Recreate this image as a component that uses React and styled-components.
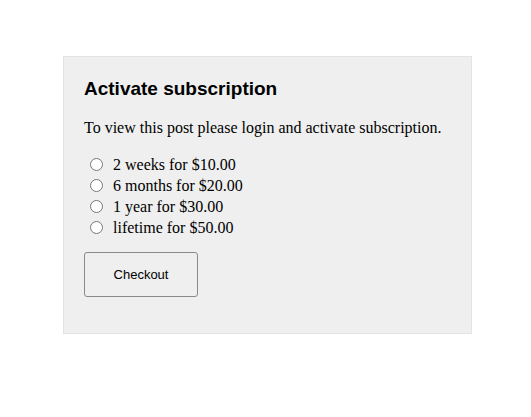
import styled, { createGlobalStyle } from "styled-components";

const GlobalStyle = createGlobalStyle`
  body {
    margin: 0;
    background: #fff;
    font-family: "Liberation Serif", "Times New Roman", serif;
  }
`;

const Page = styled.div`
  padding: 56px 0 0 63px;
`;

const Panel = styled.div`
  width: 367px;
  height: 236px;
  padding: 20px;
  background: #efefef;
  border: 1px solid #e3e3e3;
`;

const Title = styled.h3`
  margin: 0;
  font-family: "Liberation Sans", Arial, sans-serif;
  font-size: 19px;
  font-weight: bold;
  color: #000;
  line-height: 24px;
`;

const Text = styled.p`
  margin: 17px 0 18px;
  font-size: 16px;
  line-height: 19px;
  color: #000;
`;

const Options = styled.div`
  display: flex;
  flex-direction: column;
  gap: 2px;
`;

const Option = styled.label`
  display: flex;
  align-items: center;
  height: 19px;
  font-size: 16px;
  color: #000;
`;

const Radio = styled.input.attrs({ type: "radio", name: "plan" })`
  width: 13px;
  height: 13px;
  margin: 0 10px 0 6px;
`;

const Button = styled.button`
  margin-top: 15px;
  width: 114px;
  height: 45px;
  background: #efefef;
  border: 1px solid #8a8a8a;
  border-radius: 3px;
  font-family: "Liberation Sans", Arial, sans-serif;
  font-size: 13px;
  color: #000;
`;

const plans = [
  "2 weeks for $10.00",
  "6 months for $20.00",
  "1 year for $30.00",
  "lifetime for $50.00",
];

const App = () => (
  <>
    <GlobalStyle />
    <Page>
      <Panel>
        <Title>Activate subscription</Title>
        <Text>To view this post please login and activate subscription.</Text>
        <Options>
          {plans.map((p) => (
            <Option key={p}>
              <Radio />
              {p}
            </Option>
          ))}
        </Options>
        <Button>Checkout</Button>
      </Panel>
    </Page>
  </>
);

export default App;
